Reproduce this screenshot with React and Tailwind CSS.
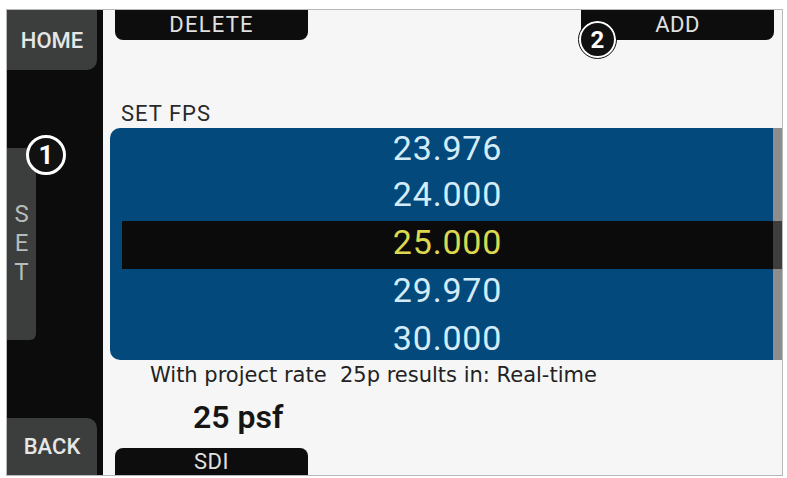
import React from "react";

const rows = [
  { v: "23.976", h: "h-[45px]", pad: "pb-[6px]" },
  { v: "24.000", h: "h-[48px]", pad: "pb-[7px]" },
  { v: "25.000", h: "h-[48px]", pad: "pb-[7px]", sel: true },
  { v: "29.970", h: "h-[48px]", pad: "pb-[7px]" },
  { v: "30.000", h: "h-[48px]", pad: "pb-[7px]" },
];

const roboto = { fontFamily: "Roboto, 'Liberation Sans', sans-serif" };

function Marker({ n, className }) {
  return (
    <div
      className={`absolute flex items-center justify-center rounded-full bg-[#111] border-white text-white font-bold text-[24px] leading-none ${className}`}
      style={roboto}
    >
      {n}
    </div>
  );
}

export default function App() {
  return (
    <div className="w-[787px] h-[478px] bg-white pt-[9px] pl-[6px] pr-[4px] pb-[2px]" style={roboto}>
      <div className="relative h-full border border-[#b8b8b8] bg-[#f6f6f6] flex overflow-hidden">
        {/* left soft-key column */}
        <div className="w-[96px] bg-[#0c0c0c] flex flex-col">
          <div className="w-[90px] h-[60px] bg-[#3b3e3c] rounded-br-[10px] flex items-center justify-center text-[22px] font-medium text-[#e6e6e6]">
            HOME
          </div>
          <div className="mt-[78px] w-[29px] h-[192px] bg-[#3b3e3c] rounded-r-[6px] flex flex-col items-center pt-[52px] text-[24px] leading-[29px] text-[#b8bcba]">
            <span>S</span>
            <span>E</span>
            <span>T</span>
          </div>
          <div className="mt-auto w-[90px] h-[57px] bg-[#3b3e3c] rounded-tr-[10px] flex items-center justify-center text-[22px] font-medium text-[#e6e6e6]">
            BACK
          </div>
        </div>

        {/* main area */}
        <div className="flex-1 flex flex-col">
          <div className="h-[30px] flex">
            <div className="ml-[12px] w-[193px] h-full bg-[#0d0d0d] rounded-b-[8px] flex items-center justify-center text-[22px] tracking-[1.2px] text-[#e0e0e0] leading-[30px]">
              DELETE
            </div>
            <div className="ml-auto mr-[8px] w-[193px] h-full bg-[#0d0d0d] rounded-b-[8px] flex items-center justify-center text-[22px] tracking-[0.5px] text-[#e0e0e0] leading-[30px]">
              ADD
            </div>
          </div>

          <div className="mt-[61px] ml-[18px] h-[26px] leading-[26px] text-[22px] tracking-[1px] text-[#2a2a2a]">
            SET FPS
          </div>

          <div className="mt-[1px] ml-[7px] h-[232px] rounded-l-[10px] bg-[#03497b] pl-[12px] overflow-hidden flex flex-col">
            {rows.map((r) => (
              <div key={r.v} className={`shrink-0 flex ${r.h} ${r.sel ? "bg-[#0b0b0b]" : ""}`}>
                <div
                  className={`flex-1 flex items-center justify-center text-[34px] tracking-[0.8px] leading-[34px] ${r.pad} ${
                    r.sel ? "text-[#dcd94e]" : "text-[#d4ecf8]"
                  }`}
                >
                  {r.v}
                </div>
                <div className={`w-[9px] ${r.sel ? "bg-[#3d3d3d]" : "bg-[#8d8d8d]"}`} />
              </div>
            ))}
          </div>

          <div
            className="mt-[3px] ml-[47px] leading-[24px] text-[21px] text-[#222] whitespace-pre"
            style={{ fontFamily: "'DejaVu Sans', sans-serif" }}
          >
            With project rate  25p results in: Real-time
          </div>

          <div className="mt-[12px] ml-[90px] leading-[36px] text-[32px] font-semibold text-[#151515] whitespace-pre">
            25 psf
          </div>

          <div className="mt-auto ml-[12px] w-[193px] h-[27px] bg-[#0d0d0d] rounded-t-[8px] flex items-start justify-center text-[22px] tracking-[0.5px] text-[#e0e0e0] leading-[27px]">
            SDI
          </div>
        </div>

        <Marker n="1" className="left-[19px] top-[125px] w-[40px] h-[40px] border-[3px] text-[26px]" />
        <Marker n="2" className="left-[572px] top-[11px] w-[37px] h-[37px] border-2 outline outline-1 outline-[#111]" />
      </div>
    </div>
  );
}
